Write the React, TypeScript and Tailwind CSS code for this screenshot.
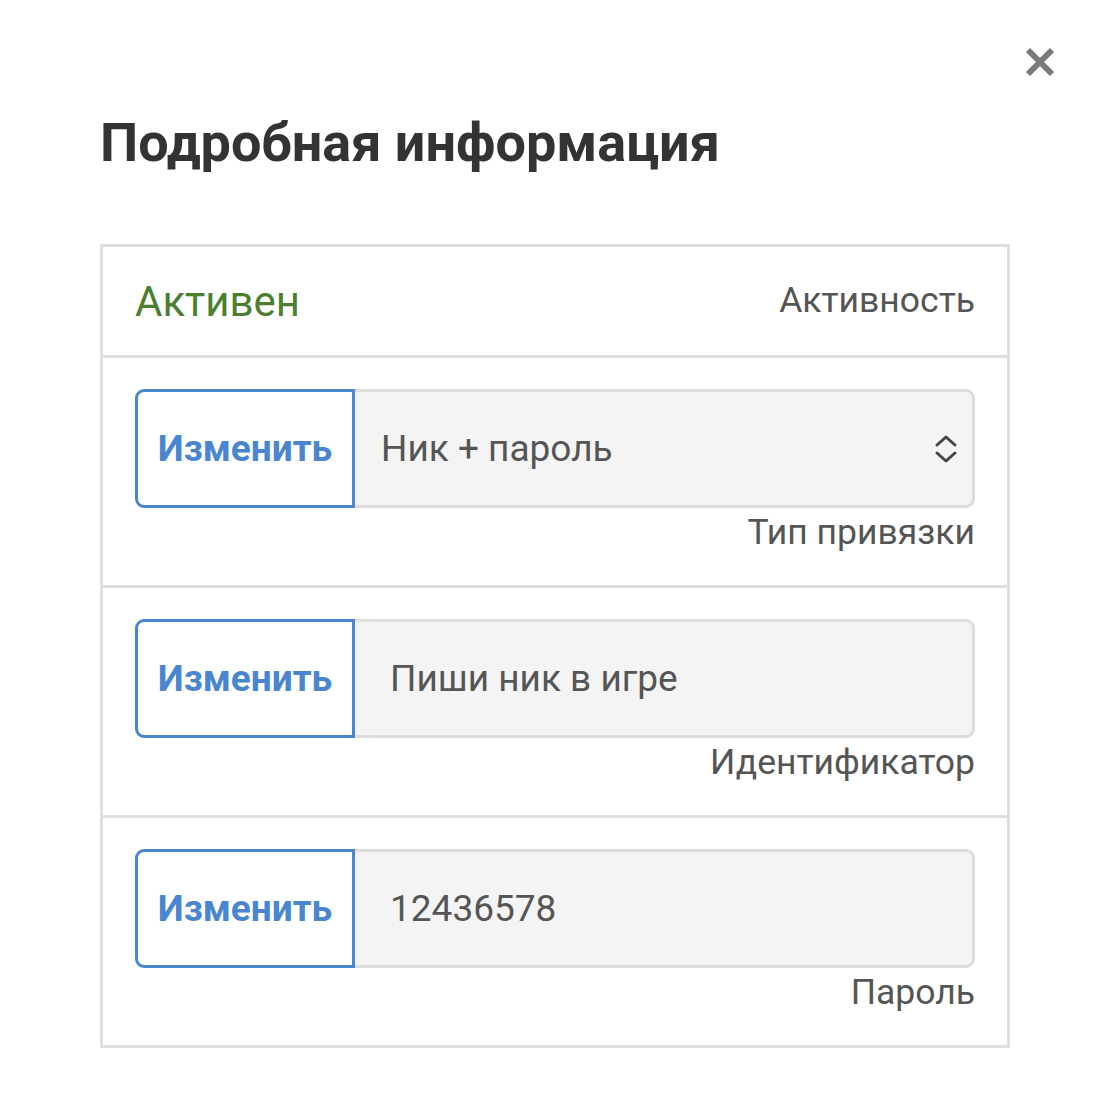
import React from "react";

const ChevronUpDown: React.FC = () => (
  <svg width="26" height="30" viewBox="0 0 26 30" fill="none" stroke="#444" strokeWidth={3} strokeLinecap="round" strokeLinejoin="round">
    <path d="M4 11 L13 3 L22 11" />
    <path d="M4 19 L13 27 L22 19" />
  </svg>
);

type FieldProps = {
  value: string;
  label: string;
  select?: boolean;
};

const Field: React.FC<FieldProps> = ({ value, label, select }) => (
  <div className="border-t-[3px] border-[#dedfe2] px-[32px] pt-[31px] pb-[31px]">
    <div className="flex h-[119px]">
      <button className="w-[220px] shrink-0 rounded-l-[9px] border-[3px] border-[#4a86d0] bg-white text-[37px] font-bold text-[#4a86d0]">
        Изменить
      </button>
      <div
        className={
          select
            ? "flex flex-1 items-center justify-between rounded-r-[9px] border-[3px] border-l-0 border-[#dddddd] bg-[#f4f4f4] pl-[26px] pr-[13px] text-[37px] text-[#555]"
            : "flex flex-1 items-center rounded-r-[9px] border-[3px] border-l-0 border-[#dddddd] bg-[#f4f4f4] pl-[35px] text-[37px] text-[#555]"
        }
      >
        <span>{value}</span>
        {select && <ChevronUpDown />}
      </div>
    </div>
    <div className="mt-[2px] text-right text-[35.5px] leading-[44px] text-[#555]">{label}</div>
  </div>
);

export default function App() {
  return (
    <div
      className="relative h-[1108px] w-[1110px] bg-white"
      style={{ fontFamily: "Roboto, 'Noto Sans', sans-serif" }}
    >
      <button className="absolute right-[54px] top-[46px] text-[#777]">
        <svg width="32" height="32" viewBox="0 0 32 32" stroke="#7a7a7a" strokeWidth={6}>
          <path d="M4 4 L28 28 M28 4 L4 28" />
        </svg>
      </button>
      <div className="px-[100px] pt-[110px]">
        <h1 className="text-[54px] font-bold leading-[66px] text-[#333]">Подробная информация</h1>
        <div className="mt-[68px] border-[3px] border-[#dedfe2]">
          <div className="flex h-[108px] items-center justify-between px-[32px]">
            <span className="text-[42px] text-[#4b7f2f]">Активен</span>
            <span className="text-[35.5px] text-[#555]">Активность</span>
          </div>
          <Field value="Ник + пароль" label="Тип привязки" select />
          <Field value="Пиши ник в игре" label="Идентификатор" />
          <Field value="12436578" label="Пароль" />
        </div>
      </div>
    </div>
  );
}
